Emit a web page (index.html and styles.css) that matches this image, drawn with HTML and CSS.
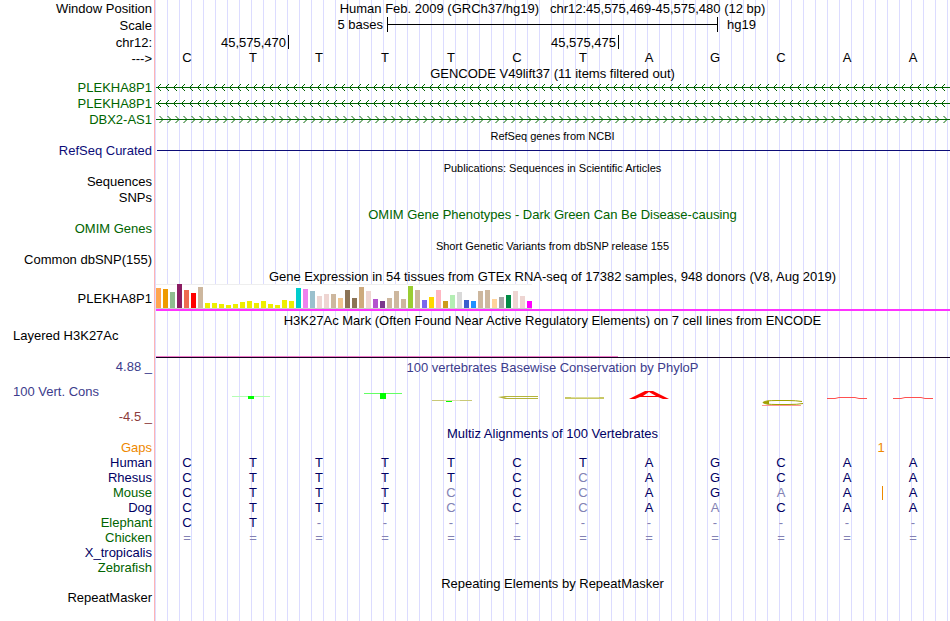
FILE: index.html
```html
<!DOCTYPE html>
<html lang="en">
<head>
<meta charset="utf-8">
<title>chr12:45,575,469-45,575,480</title>
<link rel="stylesheet" href="styles.css">
</head>
<body>
<main class="browser">
  <header>
  <div class="row tall"><span class="label">Window Position</span><span class="title">Human Feb. 2009 (GRCh37/hg19) &nbsp; chr12:45,575,469-45,575,480 (12 bp)</span></div>
  <div class="row tall"><span class="label">Scale</span>
    <div class="scale"><span class="scale-name">5 bases</span><span class="scale-bar"></span><span class="scale-db">hg19</span></div>
  </div>
  <div class="row item"><span class="label">chr12:</span>
    <div class="ruler"><span class="pos first">45,575,470</span><span class="pos second">45,575,475</span><span class="pos rest"></span></div>
  </div>
  <div class="row item"><span class="label">---&gt;</span>
    <div class="bases"><span>C</span><span>T</span><span>T</span><span>T</span><span>T</span><span>C</span><span>T</span><span>A</span><span>G</span><span>C</span><span>A</span><span>A</span></div>
  </div>
  </header>

  <section class="tracks">
  <div class="row short"><span></span><span class="title">GENCODE V49lift37 (11 items filtered out)</span></div>
  <div class="row item green"><span class="label">PLEKHA8P1</span>
    <svg class="gene" aria-hidden="true"><defs><pattern id="rev" width="8" height="16" patternUnits="userSpaceOnUse"><path d="M5 4L1.5 7.5L5 11" fill="none" stroke="#006400"/></pattern></defs><rect width="100%" height="16" fill="url(#rev)"/><rect y="7" width="100%" height="1" fill="#006400"/></svg>
  </div>
  <div class="row item green"><span class="label">PLEKHA8P1</span>
    <svg class="gene" aria-hidden="true"><rect width="100%" height="16" fill="url(#rev)"/><rect y="7" width="100%" height="1" fill="#006400"/></svg>
  </div>
  <div class="row item green"><span class="label">DBX2-AS1</span>
    <svg class="gene" aria-hidden="true"><defs><pattern id="fwd" width="8" height="16" patternUnits="userSpaceOnUse"><path d="M3.5 4L7 7.5L3.5 11" fill="none" stroke="#006400"/></pattern></defs><rect width="100%" height="16" fill="url(#fwd)"/><rect y="7" width="100%" height="1" fill="#006400"/></svg>
  </div>

  <div class="row item"><span></span><span class="title small">RefSeq genes from NCBI</span></div>
  <div class="row line navy"><span class="label">RefSeq Curated</span><span class="solid"></span></div>
  <div class="row line"><span></span><span class="title small">Publications: Sequences in Scientific Articles</span></div>
  <div class="row item"><span class="label">Sequences</span></div>
  <div class="row item"><span class="label">SNPs</span></div>
  <div class="row item green"><span></span><span class="title">OMIM Gene Phenotypes - Dark Green Can Be Disease-causing</span></div>
  <div class="row line green"><span class="label">OMIM Genes</span></div>
  <div class="row line"><span></span><span class="title small">Short Genetic Variants from dbSNP release 155</span></div>
  <div class="row item"><span class="label">Common dbSNP(155)</span></div>

  <div class="row item"><span></span><span class="title">Gene Expression in 54 tissues from GTEx RNA-seq of 17382 samples, 948 donors (V8, Aug 2019)</span></div>
  <div class="row gtex"><span class="label">PLEKHA8P1</span>
    <div class="expression">
      <div class="bars">
        <i style="height:20px;background:#ffa54f"></i><i style="height:19px;background:#ee9a00"></i><i style="height:16px;background:#8fbc8f"></i><i style="height:24px;background:#8b1c62"></i><i style="height:18px;background:#ee6a50"></i><i style="height:15px;background:#ff0000"></i><i style="height:21px;background:#cdb79e"></i>
        <i style="height:5px;background:#eeee00"></i><i style="height:5px;background:#eeee00"></i><i style="height:4px;background:#eeee00"></i><i style="height:3px;background:#eeee00"></i><i style="height:4px;background:#eeee00"></i><i style="height:6px;background:#eeee00"></i><i style="height:7px;background:#eeee00"></i><i style="height:5px;background:#eeee00"></i><i style="height:7px;background:#eeee00"></i><i style="height:4px;background:#eeee00"></i><i style="height:3px;background:#eeee00"></i><i style="height:8px;background:#eeee00"></i><i style="height:7px;background:#eeee00"></i>
        <i style="height:20px;background:#00cdcd"></i><i style="height:19px;background:#ee82ee"></i><i style="height:17px;background:#9ac0cd"></i><i style="height:12px;background:#eed5d2"></i><i style="height:14px;background:#eed5d2"></i><i style="height:14px;background:#cdb79e"></i><i style="height:10px;background:#eec591"></i><i style="height:18px;background:#8b7355"></i><i style="height:10px;background:#8b7355"></i><i style="height:21px;background:#cdaa7d"></i><i style="height:17px;background:#eed5d2"></i><i style="height:9px;background:#b452cd"></i><i style="height:7px;background:#7a378b"></i>
        <i style="height:10px;background:#cdb79e"></i><i style="height:17px;background:#cdb79e"></i><i style="height:9px;background:#cdb79e"></i><i style="height:22px;background:#9acd32"></i><i style="height:18px;background:#cdb79e"></i><i style="height:8px;background:#7a67ee"></i><i style="height:11px;background:#ffd700"></i><i style="height:18px;background:#ffb6c1"></i><i style="height:7px;background:#cd9b1d"></i><i style="height:13px;background:#b4eeb4"></i><i style="height:16px;background:#d9d9d9"></i><i style="height:8px;background:#3a5fcd"></i><i style="height:7px;background:#1e90ff"></i>
        <i style="height:17px;background:#cdb79e"></i><i style="height:18px;background:#cdb79e"></i><i style="height:9px;background:#ffd39b"></i><i style="height:11px;background:#a6a6a6"></i><i style="height:13px;background:#008b45"></i><i style="height:17px;background:#eed5d2"></i><i style="height:12px;background:#eed5d2"></i><i style="height:7px;background:#ff00ff"></i>
      </div>
    </div>
  </div>

  <div class="row tall"><span></span><span class="title">H3K27Ac Mark (Often Found Near Active Regulatory Elements) on 7 cell lines from ENCODE</span></div>
  <div class="row mark"><span class="label start">Layered H3K27Ac</span><div class="signal"><span class="layer"></span></div></div>

  <div class="row phylop">
    <div class="axis"><span class="label">4.88 _</span><span class="label start">100 Vert. Cons</span><span class="label min">-4.5 _</span></div>
    <div class="conservation">
      <span class="title">100 vertebrates Basewise Conservation by PhyloP</span>
      <svg class="logo" viewBox="0 0 795 51" preserveAspectRatio="none" aria-hidden="true">
        <path fill="#b4ffb4" d="M77 21h38v1h-38z"/><path fill="#00ff00" d="M93 21h6v3h-6z"/>
        <path fill="#64ff64" d="M209 18h38v1h-38z"/><path fill="#00ff00" d="M225 18h6v6h-6z"/>
        <path fill="#c8c878" d="M277 25h12v1h-12zM305 25h12v1h-12z"/><path fill="#dcdcaa" d="M289 25h16v1h-16z"/><path fill="#00ff00" d="M291 26h6v1h-6z"/>
        <path fill="#b4b43c" d="M343 22L350 21H383V22H352L349 22.500L352 23H383V24H350Z"/>
        <path fill="#c8c864" d="M410 22h39v2h-39z"/><path fill="#dcdca0" d="M416 22h28v1h-28z"/>
        <path fill="#ff0000" fill-rule="evenodd" d="M474 24L490 16H498L514 24H508L503 22H485L480 24ZM488 21H501L494 17Z"/>
        <path fill="none" stroke="#a0a000" stroke-width="1" d="M647 26.500Q641 25.500 633 25.500H622Q609 25.500 608 27.500Q609 29.500 622 29.500H633Q643 29.500 648 28.500"/><path fill="#a0a000" d="M607 27.500L614 25.500V29.500Z"/><path fill="#ff9696" d="M607 30h39v1h-39z"/>
        <path fill="none" stroke="#ff5050" d="M672 23.500H680L684 22.500H700L704 23.500H712M738 23.500H746L750 22.500H766L770 23.500H778"/>
      </svg>
    </div>
  </div>

  <div class="row line dark"><span></span><span class="title">Multiz Alignments of 100 Vertebrates</span></div>
  <table class="alignment">
    <colgroup><col class="species"><col span="12"></colgroup>
    <tbody>
    <tr class="gaps"><th scope="row">Gaps</th><td colspan="10"></td><td colspan="2">1</td></tr>
    <tr><th scope="row">Human</th><td>C</td><td>T</td><td>T</td><td>T</td><td>T</td><td>C</td><td>T</td><td>A</td><td>G</td><td>C</td><td>A</td><td>A</td></tr>
    <tr><th scope="row">Rhesus</th><td>C</td><td>T</td><td>T</td><td>T</td><td>T</td><td>C</td><td class="diff">C</td><td>A</td><td>G</td><td>C</td><td>A</td><td>A</td></tr>
    <tr><th scope="row" class="green">Mouse</th><td>C</td><td>T</td><td>T</td><td>T</td><td class="diff">C</td><td>C</td><td class="diff">C</td><td>A</td><td>G</td><td class="diff">A</td><td class="insert">A</td><td>A</td></tr>
    <tr><th scope="row">Dog</th><td>C</td><td>T</td><td>T</td><td>T</td><td class="diff">C</td><td>C</td><td class="diff">C</td><td>A</td><td class="diff">A</td><td>C</td><td>A</td><td>A</td></tr>
    <tr><th scope="row" class="green">Elephant</th><td>C</td><td>T</td><td class="diff">-</td><td class="diff">-</td><td class="diff">-</td><td class="diff">-</td><td class="diff">-</td><td class="diff">-</td><td class="diff">-</td><td class="diff">-</td><td class="diff">-</td><td class="diff">-</td></tr>
    <tr class="diff"><th scope="row" class="green">Chicken</th><td>=</td><td>=</td><td>=</td><td>=</td><td>=</td><td>=</td><td>=</td><td>=</td><td>=</td><td>=</td><td>=</td><td>=</td></tr>
    <tr><th scope="row">X_tropicalis</th><td colspan="12"></td></tr>
    <tr><th scope="row" class="green">Zebrafish</th><td colspan="12"></td></tr>
    </tbody>
  </table>

  <div class="row line"><span></span><span class="title">Repeating Elements by RepeatMasker</span></div>
  <div class="row line"><span class="label">RepeatMasker</span></div>
  </section>
</main>
</body>
</html>
```
FILE: styles.css
```css
body {
  margin: 0;
  background: #fff;
  color: #000;
  font-family: "Liberation Sans", Arial, sans-serif;
  font-size: 13px;
  line-height: 15px;
}

/* Pink divider after the labels, then a guide line every 12px */
.browser {
  --labels: 155px;
  min-height: 100vh;
  background:
    linear-gradient(#ffb4b4, #ffb4b4) 154px 0 / 1px 100% no-repeat,
    linear-gradient(90deg, #fff 155px, transparent 155px),
    repeating-linear-gradient(90deg, transparent 0 11px, #dcdcff 11px 12px);
}

.row {
  display: grid;
  grid-template-columns: var(--labels) minmax(0, 1fr);
  align-items: center;
}
.tall { height: 17px; }
.item { height: 16px; }
.line { height: 15px; }
.short { height: 14px; }

.label {
  padding-right: 3px;
  text-align: right;
  white-space: nowrap;
}
.label.start {
  padding-left: 13px;
  text-align: left;
}
.tracks .label {
  padding-bottom: 2px;
  line-height: 13px;
}
.title {
  text-align: center;
  white-space: nowrap;
}
.small { font-size: 11px; }
.line .small { padding-top: 2px; }

.green { color: #006400; }
.navy { color: #0c0c78; }
.dark { color: #000064; }

/* Scale and ruler */
.scale {
  display: grid;
  grid-template-columns: 232fr 331fr 232fr;
  height: 17px;
}
.scale-name {
  padding-right: 4px;
  text-align: right;
}
.scale-bar {
  height: 15px;
  border: solid #000;
  border-width: 0 1px;
  background: linear-gradient(#000, #000) 0 7px / 100% 1px no-repeat;
}
.scale-db { padding-left: 9px; }
.ruler, .bases {
  display: grid;
  grid-template-columns: repeat(12, minmax(0, 1fr));
}
.bases {
  padding: 0 3px 2px 0;
  line-height: 13px;
  text-align: center;
}
.bases span { padding-right: 2px; }
.ruler {
  padding: 0 2px 0 1px;
  text-align: right;
}
.pos {
  height: 14px;
  padding-right: 2px;
}
.first { grid-column: 1 / 3; }
.second { grid-column: 3 / 8; }
.rest { grid-column: 8 / 13; }
.second, .rest { border-left: 1px solid #000; }

.gene {
  display: block;
  width: calc(100% - 1px);
  height: 16px;
  margin-left: 1px;
}
.solid {
  height: 1px;
  margin: 0 0 2px 2px;
  background: #0c0c78;
}

/* Tissue expression */
.gtex { height: 28px; }
.tracks .gtex .label { padding-bottom: 0; }
.expression {
  height: 28px;
  margin-left: 1px;
  background: linear-gradient(#ff33ff, #ff33ff) 0 25px / 100% 2px no-repeat;
}
.bars {
  display: flex;
  align-items: flex-end;
  gap: 2px;
  box-sizing: border-box;
  width: max-content;
  height: 25px;
  border-bottom: 1px solid #ccc;
  background: linear-gradient(#eee, #eee) 0 0 / 100% 1px no-repeat, #fff;
}
.bars i { width: 5px; }

/* Histone mark */
.mark {
  height: 31px;
  align-items: start;
}
.signal {
  display: flex;
  align-items: flex-end;
  height: 28px;
  margin-left: 1px;
  border-bottom: 1px solid #140020;
}
.layer {
  width: 58.2%;
  height: 1px;
  background: #f078c8;
}

/* Conservation */
.phylop {
  height: 66px;
  align-items: start;
  color: #3c3c8c;
}
.axis {
  display: flex;
  flex-direction: column;
  gap: 10px;
}
.min { color: #8c3c3c; }
.conservation {
  display: flex;
  flex-direction: column;
}
.logo {
  width: 100%;
  height: 51px;
}

/* Alignment */
.alignment {
  width: calc(100% - 3px);
  table-layout: fixed;
  border-collapse: collapse;
  color: #000064;
}
.species { width: var(--labels); }
.alignment tr { height: 15px; }
.alignment th, .alignment td {
  padding: 0 2px 2px 0;
  font-weight: normal;
  line-height: 13px;
  text-align: center;
}
.alignment th {
  padding-right: 3px;
  text-align: right;
}
.alignment .gaps { color: #ee8800; }
.alignment .gaps td { padding-right: 0; }
.alignment .green { color: #006400; }
.alignment .diff { color: #8282b4; }
.insert { position: relative; }
.insert::after {
  content: "";
  position: absolute;
  top: 0;
  right: -2px;
  width: 1px;
  height: 14px;
  background: #ee8800;
}
```
